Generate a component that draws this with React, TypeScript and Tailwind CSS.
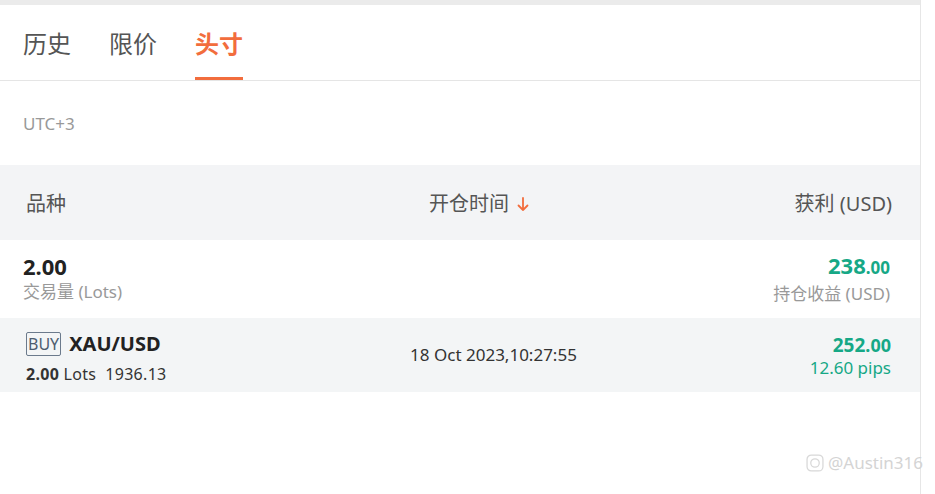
const font = { fontFamily: '"Noto Sans", "Noto Sans CJK SC", sans-serif' };

export default function App() {
  return (
    <div className="relative w-[935px] h-[494px] bg-white overflow-hidden" style={font}>
      <div className="w-[921px] h-full border-r border-[#e6e6e6] flex flex-col">
        <div className="h-[5px] bg-[#ebebeb]" />

        {/* tabs */}
        <div className="h-[76px] border-b border-[#e5e5e5] flex items-end gap-[38px] px-[23px]">
          <div className="h-full flex items-center pt-[2px] text-[24px] text-[#555]">历史</div>
          <div className="h-full flex items-center pt-[2px] text-[24px] text-[#555]">限价</div>
          <div className="h-full flex flex-col">
            <div className="flex-1 flex items-center pt-[5px] text-[24px] font-bold text-[#f26d3d]">头寸</div>
            <div className="h-[3px] bg-[#f26d3d]" />
          </div>
        </div>

        <div className="h-[84px] flex items-center px-[23px] pt-[2px] text-[17px] text-[#999]">UTC+3</div>

        {/* header */}
        <div className="h-[75px] bg-[#f3f4f6] grid grid-cols-3 items-center pl-[26px] pr-[28px] pt-[2px] text-[20px] text-[#555]">
          <div>品种</div>
          <div className="flex items-center justify-center gap-[8px] pl-[40px]">
            <span>开仓时间</span>
            <svg width="12" height="16" viewBox="0 0 12 16" fill="none" stroke="#f26d3d" strokeWidth="1.8" strokeLinecap="round" strokeLinejoin="round">
              <path d="M6 2v12M1.5 9.5L6 14l4.5-4.5" />
            </svg>
          </div>
          <div className="text-right">获利 (USD)</div>
        </div>

        {/* summary row */}
        <div className="h-[78px] flex justify-between items-center pl-[23px] pr-[30px]">
          <div className="flex flex-col">
            <span className="text-[22px] font-bold text-[#222] leading-[26px]">2.00</span>
            <span className="text-[17px] text-[#999] leading-[26px]">交易量 (Lots)</span>
          </div>
          <div className="flex flex-col items-end">
            <span className="font-bold text-[#16a886] leading-[26px]">
              <span className="text-[22px]">238</span>
              <span className="text-[17px]">.00</span>
            </span>
            <span className="text-[17px] text-[#999] leading-[26px]">持仓收益 (USD)</span>
          </div>
        </div>

        {/* position row */}
        <div className="h-[74px] bg-[#f3f5f6] grid grid-cols-3 items-center pl-[26px] pr-[29px]">
          <div className="flex flex-col gap-[5px] pt-[2px]">
            <div className="flex items-center gap-[8px]">
              <span className="border border-[#6b7a8c] rounded-[2px] px-[1px] h-[24px] flex items-center text-[16px] text-[#4e5d70] leading-none">BUY</span>
              <span className="text-[20px] font-bold text-[#222]">XAU/USD</span>
            </div>
            <div className="text-[16px] text-[#333] leading-[20px] tracking-[0.3px]">
              <span className="font-bold">2.00</span> Lots&nbsp; 1936.13
            </div>
          </div>
          <div className="text-center pl-[70px] text-[17px] text-[#333]">18 Oct 2023,10:27:55</div>
          <div className="flex flex-col items-end gap-[1px] pt-[2px]">
            <span className="font-bold text-[#16a886] text-[19px] leading-[22px]">
              252<span className="text-[18px]">.00</span>
            </span>
            <span className="text-[17px] text-[#16a886] leading-[21px]">12.60 pips</span>
          </div>
        </div>
      </div>

      {/* watermark */}
      <div className="absolute left-[806px] top-[450px] flex items-center gap-[4px] text-[17px] text-[#d4d4d4]">
        <svg width="18" height="18" viewBox="0 0 17 17" fill="none" stroke="#d8d8d8" strokeWidth="1.2">
          <rect x="1" y="1" width="15" height="15" rx="4" />
          <circle cx="8.5" cy="8.5" r="4" />
        </svg>
        <span>@Austin316</span>
      </div>
    </div>
  );
}
